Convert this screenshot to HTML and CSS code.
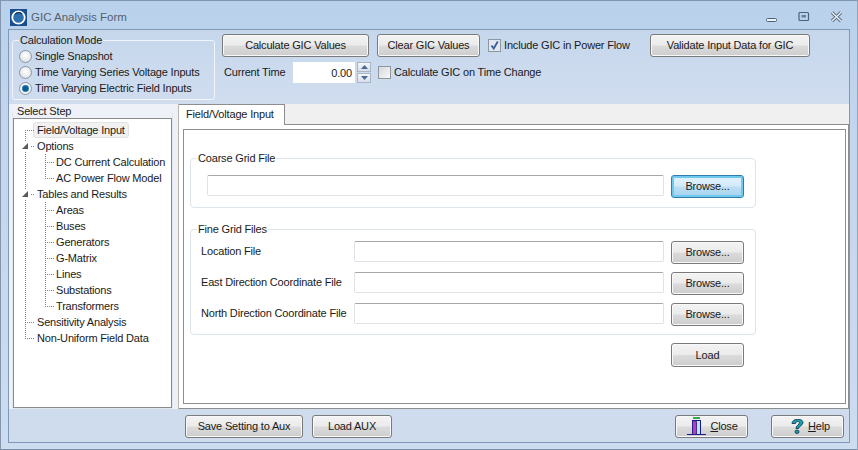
FILE: index.html
```html
<!DOCTYPE html>
<html lang="en">
<head>
<meta charset="utf-8">
<title>GIC Analysis Form</title>
<link rel="stylesheet" href="styles.css">
</head>
<body>
<div class="window">
  <header class="titlebar">
    <svg class="app-icon" width="17" height="17" viewBox="0 0 17 17"><rect width="17" height="17" fill="#1a4f8f"/><circle cx="8.5" cy="8.5" r="6.2" fill="#2f6fae" stroke="#fff" stroke-width="1.8"/><path d="M5 5.5a5 5 0 0 1 7-.5" fill="none" stroke="#0d3766" stroke-width="1.4"/></svg>
    <span class="title-text">GIC Analysis Form</span>
    <div class="win-controls">
      <svg width="12" height="12" viewBox="0 0 12 12"><rect x="0.5" y="7.5" width="10" height="3" rx="1" fill="#eef3f9" stroke="#4d6079"/></svg>
      <svg width="12" height="12" viewBox="0 0 12 12"><rect x="1" y="1.5" width="9.5" height="8" rx="1" fill="none" stroke="#4d6079" stroke-width="1.2"/><rect x="3.5" y="4" width="4.5" height="2.5" fill="#6e7f95"/></svg>
      <svg width="13" height="12" viewBox="0 0 13 12"><path d="M2 1.5l9 8.5M11 1.5l-9 8.5" stroke="#5a6b80" stroke-width="3.2"/><path d="M2 1.5l9 8.5M11 1.5l-9 8.5" stroke="#eef3f9" stroke-width="1.3"/></svg>
    </div>
  </header>
  <div class="client">
    <section class="toolbar">
      <fieldset class="mode-group">
        <legend>Calculation Mode</legend>
        <label class="radio-row"><span class="radio"></span>Single Snapshot</label>
        <label class="radio-row"><span class="radio"></span>Time Varying Series Voltage Inputs</label>
        <label class="radio-row"><span class="radio on"></span>Time Varying Electric Field Inputs</label>
      </fieldset>
      <div class="actions">
        <div class="action-row">
          <button class="btn btn-calc">Calculate GIC Values</button>
          <button class="btn btn-clear">Clear GIC Values</button>
          <label class="check-row check-include"><span class="check on"><svg width="11" height="11" viewBox="0 0 11 11"><path d="M2.5 5.500l2.200 3L8.800 1.500" fill="none" stroke="#3b5f95" stroke-width="1.8"/></svg></span>Include GIC in Power Flow</label>
          <button class="btn btn-validate">Validate Input Data for GIC</button>
        </div>
        <div class="action-row time-row">
          <span class="time-label">Current Time</span>
          <input class="time-input" type="text" value="0.00">
          <div class="spinner">
            <span class="spin"><svg width="7" height="4" viewBox="0 0 7 4"><path d="M3.500 0L7 4H0z" fill="#4a6a92"/></svg></span>
            <span class="spin"><svg width="7" height="4" viewBox="0 0 7 4"><path d="M0 0h7L3.500 4z" fill="#4a6a92"/></svg></span>
          </div>
          <label class="check-row check-change"><span class="check"></span>Calculate GIC on Time Change</label>
        </div>
      </div>
    </section>
    <div class="middle">
      <aside class="side">
        <fieldset class="step-group">
          <legend>Select Step</legend>
          <ul class="tree">
            <li class="node"><span class="g tee-first"></span><span class="label selected">Field/Voltage Input</span></li>
            <li class="node"><span class="g tee open"></span><span class="label">Options</span></li>
            <li class="node"><span class="g vert"></span><span class="g2 tee2"></span><span class="label sub">DC Current Calculation</span></li>
            <li class="node"><span class="g vert"></span><span class="g2 last2"></span><span class="label sub">AC Power Flow Model</span></li>
            <li class="node"><span class="g tee open"></span><span class="label">Tables and Results</span></li>
            <li class="node"><span class="g vert"></span><span class="g2 tee2"></span><span class="label sub">Areas</span></li>
            <li class="node"><span class="g vert"></span><span class="g2 tee2"></span><span class="label sub">Buses</span></li>
            <li class="node"><span class="g vert"></span><span class="g2 tee2"></span><span class="label sub">Generators</span></li>
            <li class="node"><span class="g vert"></span><span class="g2 tee2"></span><span class="label sub">G-Matrix</span></li>
            <li class="node"><span class="g vert"></span><span class="g2 tee2"></span><span class="label sub">Lines</span></li>
            <li class="node"><span class="g vert"></span><span class="g2 tee2"></span><span class="label sub">Substations</span></li>
            <li class="node"><span class="g vert"></span><span class="g2 last2"></span><span class="label sub">Transformers</span></li>
            <li class="node"><span class="g tee"></span><span class="label">Sensitivity Analysis</span></li>
            <li class="node"><span class="g last"></span><span class="label">Non-Uniform Field Data</span></li>
          </ul>
        </fieldset>
      </aside>
      <main class="tabs">
        <div class="tab-strip"><div class="tab">Field/Voltage Input</div></div>
        <div class="tab-outer">
          <div class="tab-page">
            <fieldset class="file-group coarse">
              <legend>Coarse Grid File</legend>
              <div class="coarse-row">
                <input class="file-input wide" type="text">
                <button class="btn btn-browse focused">Browse...</button>
              </div>
            </fieldset>
            <fieldset class="file-group fine">
              <legend>Fine Grid Files</legend>
              <div class="fine-grid">
                <span class="file-label">Location File</span><input class="file-input" type="text"><button class="btn btn-browse">Browse...</button>
                <span class="file-label">East Direction Coordinate File</span><input class="file-input" type="text"><button class="btn btn-browse">Browse...</button>
                <span class="file-label">North Direction Coordinate File</span><input class="file-input" type="text"><button class="btn btn-browse">Browse...</button>
              </div>
            </fieldset>
            <div class="load-row"><button class="btn btn-browse btn-load">Load</button></div>
          </div>
        </div>
      </main>
    </div>
    <footer class="bottom">
      <button class="btn btn-save">Save Setting to Aux</button>
      <button class="btn btn-aux">Load AUX</button>
      <span class="spacer"></span>
      <button class="btn btn-icon btn-close">
        <svg width="19" height="19" viewBox="0 0 19 19"><rect x="6" y="0" width="7" height="2" fill="#3aa655"/><path d="M0 17.500h5.500M13.500 17.500H19" stroke="#1a1a8c" stroke-width="1.200" fill="none"/><rect x="5.500" y="3.500" width="8" height="14" fill="#b8e6ea" stroke="#1a1a8c"/><path d="M5.500 3.500l4 1v13h-4z" fill="#c03ab8" stroke="#1a1a8c" stroke-width=".8"/></svg>
        <span><u>C</u>lose</span>
      </button>
      <button class="btn btn-icon btn-help">
        <svg width="13" height="15" viewBox="0 0 13 15"><path d="M1 4.500C1-1 12-1 12 3.500c0 3-4 3.500-4.500 6H5C5 6 8.500 6 8.500 3.800 8.500 2 4.500 2 4.500 4.500z" fill="#18a0a8" stroke="#123a55" stroke-width=".9"/><ellipse cx="6" cy="12.800" rx="2" ry="1.700" fill="#18a0a8" stroke="#123a55" stroke-width=".9"/></svg>
        <span><u>H</u>elp</span>
      </button>
    </footer>
  </div>
</div>
</body>
</html>
```

FILE: styles.css
```css
* { box-sizing: border-box; }
html, body { margin: 0; padding: 0; }
body {
  width: 858px;
  height: 450px;
  overflow: hidden;
  font: 11px/13px "Liberation Sans", Arial, sans-serif;
  letter-spacing: -0.18px;
  color: #1a1a1a;
}
button, input { font: inherit; letter-spacing: inherit; color: inherit; margin: 0; }
fieldset { margin: 0; min-width: 0; }

.window {
  width: 858px;
  height: 450px;
  display: flex;
  flex-direction: column;
  padding: 0 7px 6px;
  background: linear-gradient(#b9d1ec, #c4d6ec 30%, #cddcef);
  border: 1px solid #8396ad;
  border-right-color: #93a5bb;
  border-bottom-color: #7d8fa5;
}
.titlebar { height: 28px; display: flex; align-items: center; flex: none; padding-top: 4px; }
.app-icon { margin: 0 4px 0 2px; }
.title-text { font-size: 11.5px; letter-spacing: 0; color: #55606e; }
.win-controls { margin-left: auto; display: flex; gap: 20px; margin-right: 7px; align-items: center; }

.client {
  flex: 1;
  display: flex;
  flex-direction: column;
  min-height: 0;
  border: 1px solid #7f9ab9;
  background: #cfdcee;
}

.btn {
  height: 23px;
  padding: 0;
  border: 1px solid #7a7a7a;
  border-radius: 3px;
  background: linear-gradient(#f3f3f3, #ebebeb 48%, #dbdbdb 52%, #cdcdcd);
  box-shadow: inset 0 0 0 1px #f8f8f8;
  text-align: center;
  white-space: nowrap;
}

.toolbar {
  height: 74px;
  flex: none;
  display: flex;
  padding: 4px 0 0 3px;
  background: linear-gradient(#c6d7ec, #d0ddef);
}
.mode-group {
  width: 203px;
  height: 66px;
  padding: 0 0 0 6px;
  border: 1px solid #f0f5fb;
  border-radius: 3px;
}
.mode-group legend { padding: 0 1px; margin: 0 0 1px; line-height: 13px; }
.radio-row { display: flex; align-items: center; height: 16px; gap: 3px; }
.radio {
  width: 13px;
  height: 13px;
  border-radius: 50%;
  border: 1px solid #8c96a3;
  background: radial-gradient(circle at 50% 40%, #fff, #d7dbe0);
}
.radio.on { background: radial-gradient(circle, #0e5c92 0 2.5px, #59a9d8 3.5px, #f2f4f7 4px); }

.actions { margin-left: 7px; display: flex; flex-direction: column; flex: 1; }
.action-row { display: flex; align-items: center; }
.btn-calc { width: 147px; }
.btn-clear { width: 103px; margin-left: 8px; }
.check-row { display: flex; align-items: center; gap: 3px; }
.check-include { margin-left: 8px; width: 162px; }
.btn-validate { width: 160px; }
.check {
  width: 13px;
  height: 13px;
  border: 1px solid #8e96a0;
  background: linear-gradient(135deg, #d5d8dc, #f7f8f9);
  display: flex;
  align-items: center;
  justify-content: center;
}
.check.on { background: #e2e8f1; }
.time-row { margin-top: 5px; }
.time-label { width: 71px; padding-left: 2px; }
.time-input {
  width: 62px;
  height: 21px;
  border: 0;
  background: #fff;
  text-align: right;
  padding: 0 3px 0 0;
}
.spinner { display: flex; flex-direction: column; gap: 1px; margin-left: 2px; }
.spin {
  width: 14px;
  height: 10px;
  border: 1px solid #a9b6c6;
  background: linear-gradient(#f4f6f9, #d7deea);
  display: flex;
  align-items: center;
  justify-content: center;
}
.check-change { margin-left: 7px; }

.middle { flex: 1; min-height: 0; display: flex; background: #f0f0f0; }
.side {
  width: 166px;
  flex: none;
  padding: 1px 2px 0 3px;
  background: #eef2f8;
}
.step-group {
  height: 100%;
  padding: 0;
  border: 1px solid #dfe6ee;
  border-top: 0;
  border-radius: 2px;
}
.step-group legend { padding: 0 1px; margin-left: 3px; line-height: 13px; }
.tree {
  list-style: none;
  margin: 0;
  padding: 3px 0 0 1px;
  height: 100%;
  background: #fff;
  border: 1px solid #8b8b8b;
}
.node { display: flex; align-items: stretch; height: 16px; white-space: nowrap; }
.g { width: 20px; flex: none; background-repeat: no-repeat; position: relative; }
.g2 { width: 20px; flex: none; background-repeat: no-repeat; }
.label { padding: 0 2px; line-height: 16px; }
.label.sub { padding: 0 1px; }
.label.selected {
  background: #f1f1f1;
  border: 1px solid #e2e2e2;
  border-radius: 3px;
  line-height: 14px;
  margin-left: -2px;
  padding: 0 3px;
}

/* dotted tree guides: vertical at 10px, horizontal at row middle */
.vert, .tee, .tee-first, .last, .tee2, .last2 {
  --dv: repeating-linear-gradient(#808080 0 1px, transparent 1px 2px);
  --dh: repeating-linear-gradient(90deg, #808080 0 1px, transparent 1px 2px);
}
.vert { background-image: var(--dv); background-size: 1px 100%; background-position: 10px 0; }
.tee, .tee2 {
  background-image: var(--dv), var(--dh);
  background-size: 1px 100%, 10px 1px;
  background-position: 10px 0, 10px 8px;
}
.tee-first {
  background-image: var(--dv), var(--dh);
  background-size: 1px 8px, 10px 1px;
  background-position: 10px 8px, 10px 8px;
}
.last, .last2 {
  background-image: var(--dv), var(--dh);
  background-size: 1px 9px, 10px 1px;
  background-position: 10px 0, 10px 8px;
}
.open::before {
  content: "";
  position: absolute;
  left: 6px;
  top: 3px;
  width: 9px;
  height: 10px;
  background: #fff;
}
.open::after {
  content: "";
  position: absolute;
  left: 7px;
  top: 5px;
  width: 6px;
  height: 6px;
  background: #595959;
  clip-path: polygon(100% 0, 100% 100%, 0 100%);
}

.tabs { flex: 1; min-width: 0; display: flex; flex-direction: column; border-left: 1px solid #b5b5b5; margin-left: 3px; }
.tab-strip { height: 20px; flex: none; background: #f0f0f0; display: flex; align-items: flex-end; }
.tab {
  height: 21px;
  width: 106px;
  margin-bottom: -1px;
  padding: 3px 0 0 7px;
  background: #fff;
  border: 1px solid #8e8e8e;
  border-bottom: 0;
  border-left: 0;
  position: relative;
  z-index: 1;
}
.tab-outer {
  flex: 1;
  min-height: 0;
  background: #fff;
  border: 1px solid #8e8e8e;
  border-left: 0;
  padding: 4px 2px 4px 4px;
}
.tab-page {
  height: 100%;
  border: 1px solid #8e8e8e;
  background: #fff;
  padding: 22px 0 0 6px;
  display: flex;
  flex-direction: column;
  align-items: flex-start;
}
.file-group {
  width: 566px;
  border: 1px solid #dde4ea;
  border-radius: 4px;
  padding: 0;
}
.file-group legend { padding: 0 1px; margin-left: 6px; line-height: 13px; }
.coarse { height: 56px; }
.coarse-row { display: flex; align-items: flex-start; gap: 7px; padding: 10px 0 0 16px; }
.file-input {
  height: 21px;
  border: 1px solid #dfe3e8;
  border-top-color: #a8a8a8;
  border-radius: 2px;
  background: #fff;
  padding: 0;
}
.wide { width: 457px; }
.btn-browse { width: 73px; }
.focused {
  border-color: #2f7da8;
  background: linear-gradient(#e4f3fc, #d3eafa 48%, #bcdff5 52%, #a5d2ef);
  box-shadow: inset 0 0 0 2px #6ec9ee;
}
.fine { height: 112px; margin-top: 15px; }
.fine-grid {
  display: grid;
  grid-template-columns: 153px 310px 73px;
  row-gap: 8px;
  align-items: start;
  padding: 5px 0 0 10px;
}
.fine-grid .btn-browse { margin-left: 7px; width: 73px; }
.fine-grid .file-input { width: 310px; }
.file-label { line-height: 21px; white-space: nowrap; }
.load-row { width: 554px; margin-top: 8px; display: flex; justify-content: flex-end; }
.btn-load { height: 24px; }

.bottom {
  height: 33px;
  flex: none;
  display: flex;
  align-items: flex-start;
  padding: 6px 5px 0 176px;
  background: #cfdcee;
}
.btn-save { width: 118px; }
.btn-aux { width: 80px; margin-left: 9px; }
.spacer { flex: 1; }
.btn-icon { display: flex; align-items: center; justify-content: center; gap: 4px; }
.btn-close { width: 73px; padding-left: 2px; }
.btn-help { width: 73px; margin-left: 23px; padding-left: 6px; }
.btn-icon svg { flex: none; }
```
